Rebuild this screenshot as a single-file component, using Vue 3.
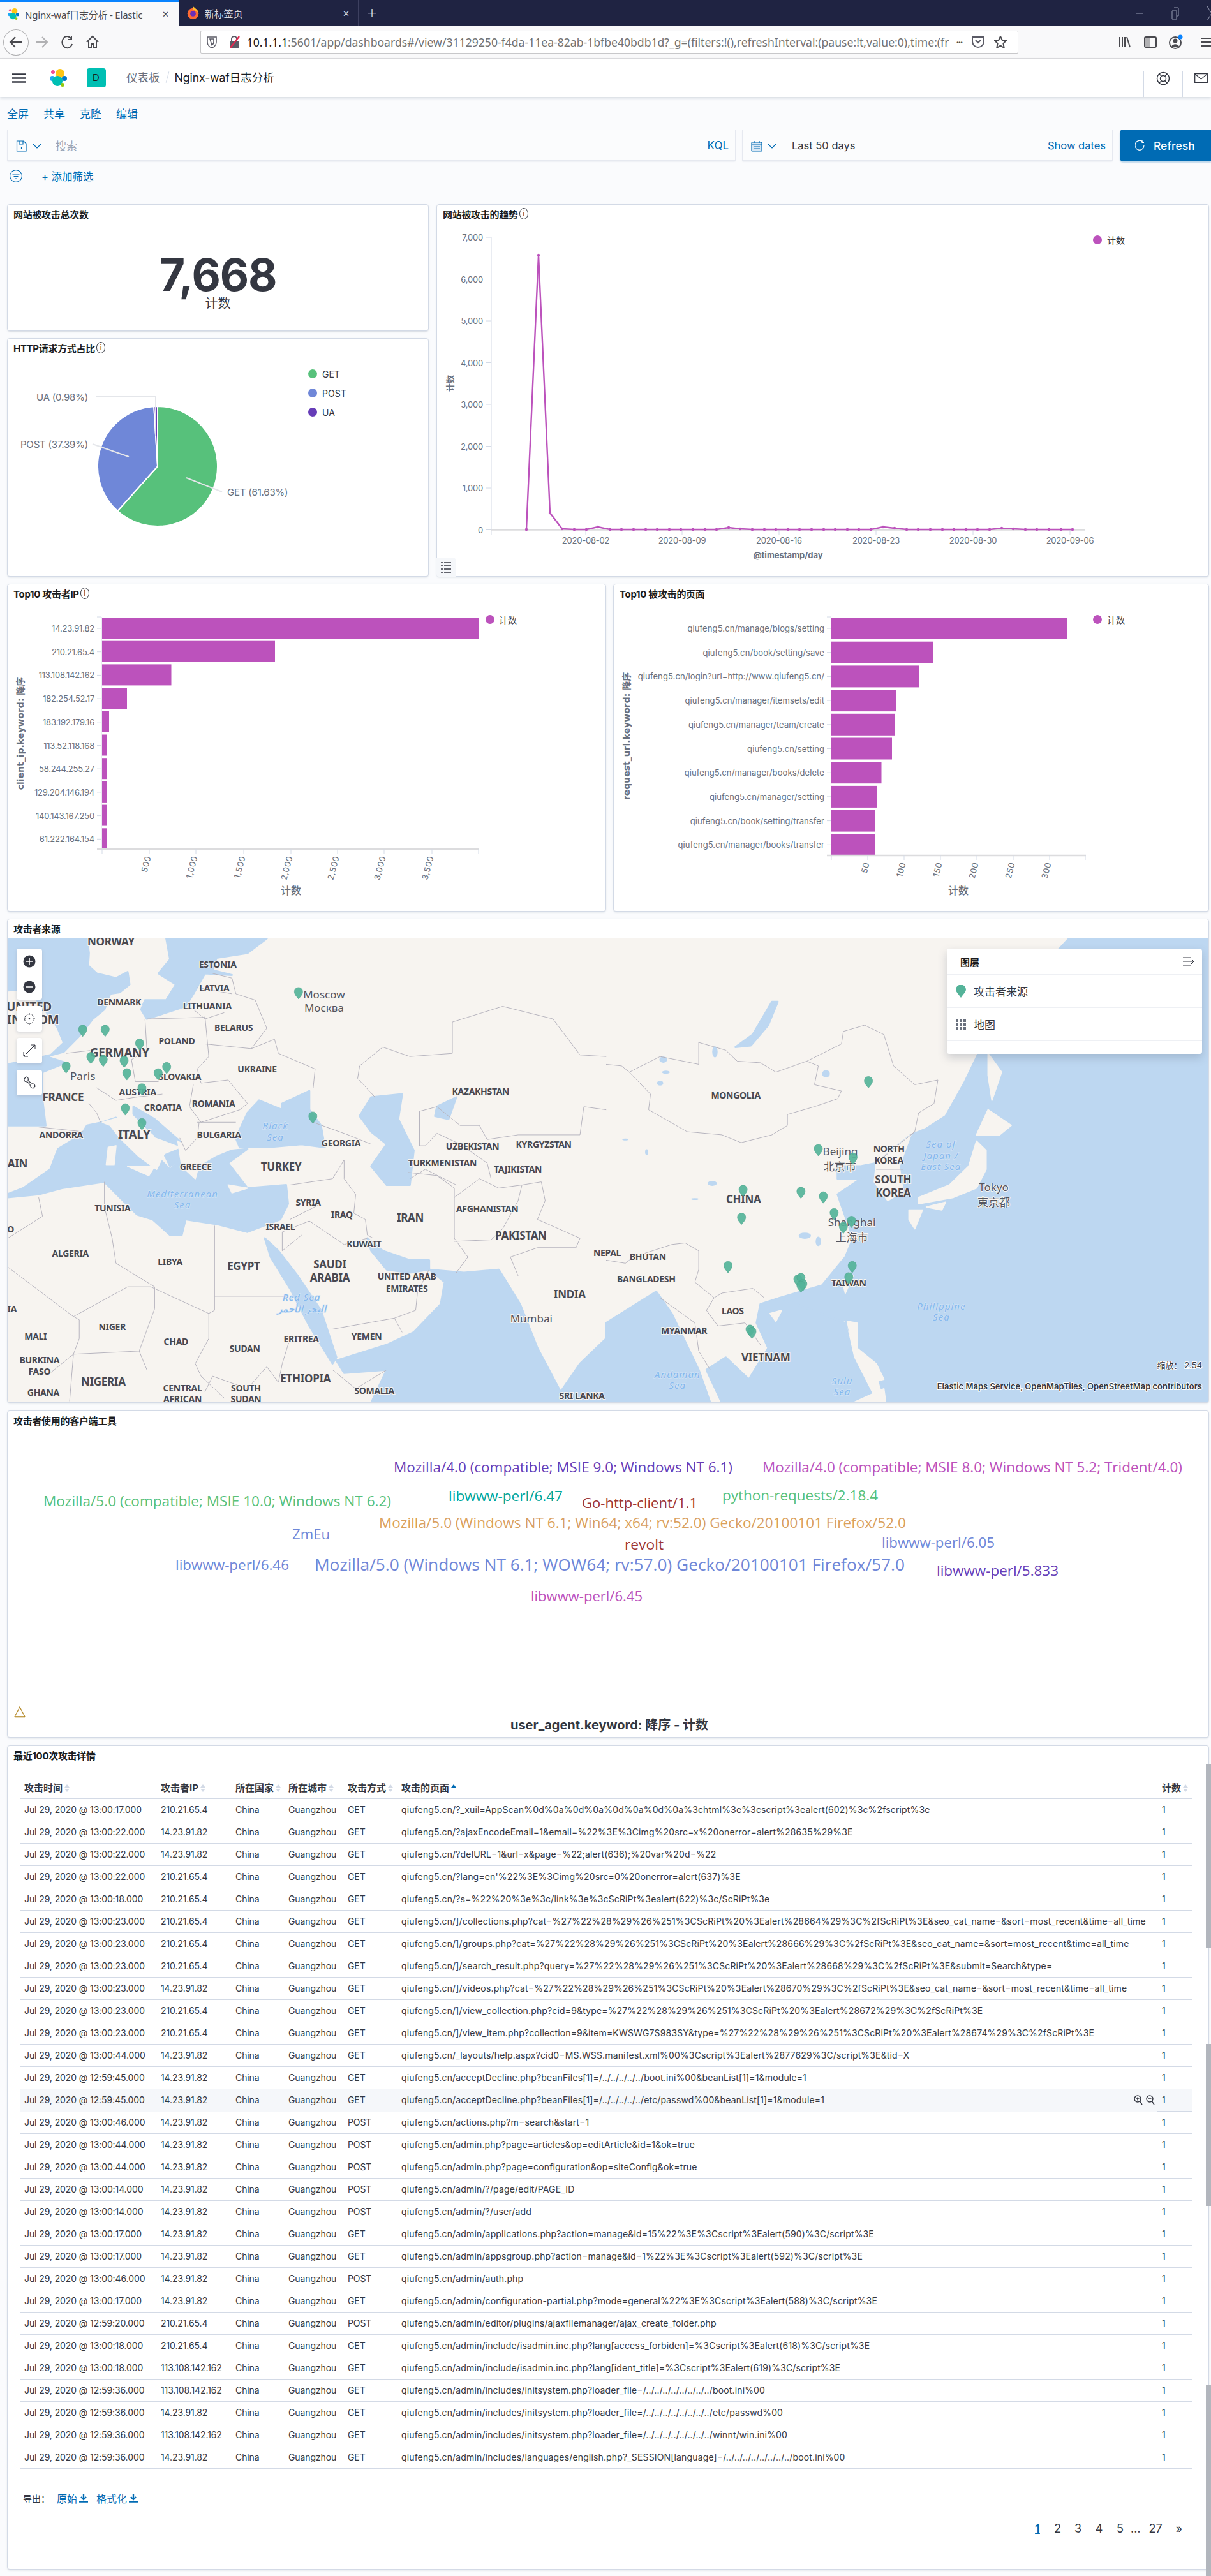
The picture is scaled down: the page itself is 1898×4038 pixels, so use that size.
<script setup>
// dashboard data, chart coordinates are page pixels (svg viewBox is set to match)
const url = 'fbe40bdb1d?_g=(filters:!(),refreshInterval:(pause:!t,value:0),time:(fr'

const pieCx = 247
const pieCy = 731
const pieR = 94
function arc(from, to) {
  const a = (from * 2 * Math.PI) / 100 - Math.PI / 2
  const b = (to * 2 * Math.PI) / 100 - Math.PI / 2
  const big = to - from > 50 ? 1 : 0
  return `M${pieCx},${pieCy} L${pieCx + pieR * Math.cos(a)},${pieCy + pieR * Math.sin(a)} A${pieR},${pieR} 0 ${big} 1 ${pieCx + pieR * Math.cos(b)},${pieCy + pieR * Math.sin(b)} Z`
}
const slices = [
  { d: arc(0, 61.63), color: '#57c17b' },
  { d: arc(61.63, 99.02), color: '#6f87d8' },
  { d: arc(99.02, 100), color: '#663db8' }
]
const pieLegend = [
  { name: 'GET', color: '#57c17b', y: 586 },
  { name: 'POST', color: '#6f87d8', y: 616 },
  { name: 'UA', color: '#663db8', y: 646 }
]

const lineTicksY = [0, 1000, 2000, 3000, 4000, 5000, 6000, 7000].map((v) => ({
  v: v.toLocaleString('en-US'),
  y: 830.5 - (v / 1000) * 65.5
}))
const lineTicksX = [
  { t: '2020-08-02', x: 918 },
  { t: '2020-08-09', x: 1069 },
  { t: '2020-08-16', x: 1221 },
  { t: '2020-08-23', x: 1373 },
  { t: '2020-08-30', x: 1525 },
  { t: '2020-09-06', x: 1677 }
]
const bumps = { 937: 826, 1142: 827, 1161: 829, 1384: 826, 1403: 828, 1570: 828, 1589: 829 }
const linePts = [
  [825, 830],
  [844, 400],
  [862, 804],
  [881, 829]
]
for (let x = 900; x < 1696; x += 18.6) {
  const rx = Math.round(x)
  const key = Object.keys(bumps).find((k) => Math.abs(k - rx) < 10)
  linePts.push([rx, key ? bumps[key] : 830])
}
const linePath = linePts.map((p) => p.join(',')).join(' ')

const ipBars = [
  { name: '14.23.91.82', end: 750 },
  { name: '210.21.65.4', end: 431 },
  { name: '113.108.142.162', end: 268.5 },
  { name: '182.254.52.17', end: 199 },
  { name: '183.192.179.16', end: 171 },
  { name: '113.52.118.168', end: 167 },
  { name: '58.244.255.27', end: 167 },
  { name: '129.204.146.194', end: 167 },
  { name: '140.143.167.250', end: 167 },
  { name: '61.222.164.154', end: 167 }
].map((b, i) => ({ ...b, y: 968 + i * 36.7, h: 33 }))
const ipTicks = [
  ['500', 234],
  ['1,000', 307],
  ['1,500', 382],
  ['2,000', 456],
  ['2,500', 529],
  ['3,000', 602],
  ['3,500', 677]
]

const pageBars = [
  { name: 'qiufeng5.cn/manage/blogs/setting', end: 1672 },
  { name: 'qiufeng5.cn/book/setting/save', end: 1462 },
  { name: 'qiufeng5.cn/login?url=http://www.qiufeng5.cn/', end: 1440 },
  { name: 'qiufeng5.cn/manager/itemsets/edit', end: 1405 },
  { name: 'qiufeng5.cn/manager/team/create', end: 1402 },
  { name: 'qiufeng5.cn/setting', end: 1398 },
  { name: 'qiufeng5.cn/manager/books/delete', end: 1381.5 },
  { name: 'qiufeng5.cn/manager/setting', end: 1375 },
  { name: 'qiufeng5.cn/book/setting/transfer', end: 1372 },
  { name: 'qiufeng5.cn/manager/books/transfer', end: 1372 }
].map((b, i) => ({ ...b, y: 968 + i * 37.7, h: 34 }))
const pageTicks = [
  ['50', 1360],
  ['100', 1417],
  ['150', 1474],
  ['200', 1531],
  ['250', 1588],
  ['300', 1645]
]

// map: points were read off two crops, so each crop has its own scale
const z6 = (x, y) => ({ x: x / 1.65, y: 1440 + y / 2.036 })
const z7 = (x, y) => ({ x: 950 + x / 1.654, y: 1440 + y / 2.036 })

const labels6 = [
  ['NORWAY', 287, 73, 'm'], ['ESTONIA', 563, 145, 's'], ['LATVIA', 554, 221, 's'], ['LITHUANIA', 536, 277, 's'],
  ['DENMARK', 308, 266, 's'], ['UNITED', 75, 280, 'l'], ['KINGDOM', 75, 322, 'l'], ['BELARUS', 604, 347, 's'],
  ['POLAND', 457, 389, 's'], ['GERMANY', 309, 427, 'l'], ['UKRAINE', 665, 480, 's'], ['SLOVAKIA', 465, 504, 's'],
  ['FRANCE', 163, 570, 'm'], ['AUSTRIA', 356, 552, 's'], ['CROATIA', 421, 602, 's'], ['ROMANIA', 552, 590, 's'],
  ['ANDORRA', 158, 690, 's'], ['ITALY', 347, 688, 'l'], ['BULGARIA', 566, 689, 's'], ['GEORGIA', 882, 715, 's'],
  ['SPAIN', 30, 780, 'm'], ['GREECE', 506, 790, 's'], ['TURKEY', 727, 790, 'm'], ['KAZAKHSTAN', 1243, 551, 's'],
  ['UZBEKISTAN', 1222, 725, 's'], ['KYRGYZSTAN', 1406, 720, 's'], ['TURKMENISTAN', 1144, 779, 's'],
  ['TAJIKISTAN', 1339, 799, 's'], ['TUNISIA', 291, 924, 's'], ['SYRIA', 797, 904, 's'], ['IRAQ', 884, 943, 's'],
  ['IRAN', 1061, 954, 'm'], ['AFGHANISTAN', 1260, 926, 's'], ['PAKISTAN', 1347, 1011, 'm'], ['ISRAEL', 725, 982, 's'],
  ['KUWAIT', 941, 1037, 's'], ['MOROCCO', -22, 990, 's'], ['ALGERIA', 182, 1068, 's'], ['LIBYA', 440, 1095, 's'],
  ['EGYPT', 630, 1109, 'm'], ['SAUDI', 853, 1102, 'm'], ['ARABIA', 853, 1145, 'm'], ['UNITED ARAB', 1052, 1142, 's'],
  ['EMIRATES', 1052, 1179, 's'], ['INDIA', 1473, 1199, 'm'], ['MAURITANIA', -30, 1245, 's'], ['NIGER', 290, 1302, 's'],
  ['MALI', 92, 1332, 's'], ['CHAD', 455, 1348, 's'], ['SUDAN', 633, 1371, 's'], ['ERITREA', 779, 1341, 's'],
  ['YEMEN', 948, 1333, 's'], ['BURKINA', 102, 1407, 's'], ['FASO', 102, 1444, 's'], ['NIGERIA', 267, 1478, 'm'],
  ['CENTRAL', 472, 1497, 's'], ['AFRICAN', 472, 1533, 's'], ['SOUTH', 636, 1497, 's'], ['SUDAN', 636, 1533, 's'],
  ['ETHIOPIA', 790, 1466, 'm'], ['SOMALIA', 968, 1505, 's'], ['GHANA', 112, 1512, 's'], ['SRI LANKA', 1505, 1522, 's'],
  ['NEPAL', 1570, 1065, 's']
]
const labels7 = [
  ['MONGOLIA', 336, 563, 's'], ['NORTH', 733, 733, 's'], ['KOREA', 733, 770, 's'], ['SOUTH', 744, 831, 'm'],
  ['KOREA', 744, 874, 'm'], ['CHINA', 356, 895, 'm'], ['BHUTAN', 108, 1078, 's'], ['BANGLADESH', 104, 1150, 's'],
  ['TAIWAN', 629, 1162, 's'], ['LAOS', 328, 1251, 's'], ['MYANMAR', 202, 1314, 's'], ['VIETNAM', 414, 1399, 'm']
]
const cities6 = [['Paris', 214, 501], ['Moscow', 838, 241], ['Москва', 838, 284], ['Mumbai', 1374, 1275]]
const cities7 = [
  ['Beijing', 607, 743], ['北京市', 606, 792], ['Tokyo', 1005, 857], ['東京都', 1005, 905],
  ['Shanghai', 637, 968], ['上海市', 637, 1017]
]
const seas6 = [
  ['Black', 712, 660], ['Sea', 712, 696], ['Mediterranean', 472, 877], ['Sea', 472, 913],
  ['Red Sea', 780, 1207], ['البحر الأحمر', 780, 1245]
]
const seas7 = [
  ['Sea of', 868, 719], ['Japan /', 868, 755], ['East Sea', 868, 790], ['Philippine', 869, 1235], ['Sea', 869, 1270],
  ['Andaman', 185, 1453], ['Sea', 185, 1488], ['Sulu', 612, 1474], ['Sea', 612, 1509]
]
const mapLabels = [
  ...labels6.map(([t, x, y, k]) => ({ t, k, ...z6(x, y) })),
  ...labels7.map(([t, x, y, k]) => ({ t, k, ...z7(x, y) }))
]
const mapCities = [
  ...cities6.map(([t, x, y]) => ({ t, ...z6(x, y) })),
  ...cities7.map(([t, x, y]) => ({ t, ...z7(x, y) }))
]
const mapSeas = [
  ...seas6.map(([t, x, y]) => ({ t, ...z6(x, y) })),
  ...seas7.map(([t, x, y]) => ({ t, ...z7(x, y) }))
]
const pins = [
  ...[[214, 358], [272, 358], [361, 402], [235, 445], [267, 454], [321, 457], [171, 475], [328, 497], [409, 497],
    [431, 477], [367, 545], [324, 609], [367, 656], [772, 238], [809, 635]].map(([x, y]) => z6(x, y)),
  ...[[680, 522], [550, 739], [640, 766], [355, 869], [505, 875], [563, 890], [351, 958], [591, 943], [636, 968],
    [615, 987], [316, 1112], [638, 1112], [629, 1148], [497, 1155], [505, 1150], [510, 1170], [505, 1175], [373, 1315],
    [378, 1322]].map(([x, y]) => z7(x, y))
]
const lakes = [[148, 450, 10, 10], [155, 490, 10, 5], [140, 525, 8, 8], [275, 845, 12, 8], [230, 895, 10, 3],
  [105, 745, 4, 9], [50, 705, 8, 3], [570, 495, 10, 12], [282, 425, 7, 18], [515, 1012, 16, 10], [550, 1030, 7, 15]]

const water6 = [
  'M18,63 L225,63 L230,110 L228,150 L250,175 L300,190 L330,170 L335,210 L310,235 L285,240 L270,290 L240,320 L205,375 L165,425 L120,440 L170,460 L110,490 L108,560 L118,660 L18,660 Z',
  'M430,63 L690,63 L640,110 L560,125 L550,165 L600,180 L530,175 L500,240 L480,280 L380,320 L365,290 L375,260 L430,260 L455,210 L410,175 L440,130 Z',
  'M18,880 L60,860 L130,800 L150,735 L210,690 L225,660 L265,650 L300,635 L330,680 L390,740 L440,800 L470,770 L505,800 L560,760 L600,740 L640,735 L590,780 L640,860 L740,850 L745,910 L725,960 L640,1000 L560,975 L480,960 L470,1010 L440,1010 L395,960 L355,945 L310,890 L270,840 L160,860 L100,880 L18,890 Z',
  'M345,600 L400,640 L465,710 L470,770 L440,790 L400,690 L345,630 Z',
  'M610,700 L640,620 L670,580 L730,610 L730,590 L800,550 L800,610 L830,660 L840,730 L780,720 L690,730 L620,730 Z',
  'M930,630 L960,570 L1040,560 L1030,640 L1070,740 L1060,850 L1000,850 L960,790 L1000,720 L960,680 Z',
  'M685,1020 L720,1060 L770,1140 L830,1250 L870,1400 L860,1420 L800,1300 L750,1180 L700,1080 Z',
  'M950,1020 L990,1060 L1060,1090 L1110,1090 L1110,1120 L1060,1130 L1000,1120 L960,1060 Z',
  'M1110,1120 L1200,1130 L1290,1120 L1345,1230 L1390,1370 L1450,1510 L1500,1420 L1568,1340 L1568,1545 L960,1545 L1000,1440 L890,1450 L870,1410 L1000,1360 L1070,1320 L1140,1230 L1150,1160 Z',
  'M1130,600 L1180,570 L1160,640 L1125,630 Z'
]
const land6 = [
  'M18,235 L70,230 L110,290 L145,350 L160,395 L130,430 L60,450 L18,460 Z',
  'M265,650 L340,625 L400,700 L465,730 L425,750 L405,800 L360,760 L310,700 L285,660 Z',
  'M460,710 L520,760 L505,830 L470,790 Z',
  'M280,730 L300,725 L295,785 L275,785 Z',
  'M330,790 L400,790 L385,820 Z',
  'M590,850 L640,860 L600,875 Z'
]
const border6 = [
  'M375,320 L380,420 L340,450 L350,520 L410,520', 'M240,420 L170,430', 'M530,310 L540,440 L510,480 L520,525',
  'M380,320 L530,315', 'M530,400 L650,415 L710,385 L720,430 L815,480 L810,540',
  'M520,525 L590,515 L640,590 L620,610 L520,650 L490,600 L500,530', 'M250,540 L300,580 L350,570 L420,560',
  'M230,590 L250,620 L260,650', 'M100,665 L215,680', 'M515,650 L510,700 L480,740 L465,700', 'M610,650 L510,650',
  'M550,175 L600,190 L610,240 L660,260 L690,350 L650,415', 'M510,220 L600,240', 'M490,280 L530,320 L580,300',
  'M810,650 L900,690 L960,720', 'M750,850 L860,830 L890,770 L890,830 L920,880 L915,940 L945,960 L950,1010 L965,1020',
  'M1055,810 L1130,820 L1175,860 L1175,1020 L1210,1080 L1180,1130',
  'M1175,890 L1240,830 L1290,860 L1350,850 L1340,900 L1300,990 L1270,1025 L1175,1030',
  'M1060,830 L1100,800 L1180,850', 'M1085,615 L1085,725 L1100,725 L1130,685 L1190,720 L1260,780 L1270,830',
  'M1085,615 L1130,600 L1190,660 L1240,660 L1260,705 L1340,690 L1430,690 L1500,690 L1510,600 L1568,610',
  'M930,470 L990,410 L1060,440 L1170,430 L1170,330 L1300,280 L1430,320 L1500,435 L1568,440',
  'M930,470 L925,510 L970,570',
  'M1350,850 L1400,840 L1410,900 L1390,960 L1500,1020 L1490,1050 L1390,1050 L1320,1080 L1340,1140',
  'M18,1110 L190,1270 L330,1175 L390,1175 L540,1260 L555,1250 L555,980', 'M555,1205 L740,1205',
  'M290,1020 L300,1100 L400,1175 L400,1245 L360,1380 L380,1440', 'M190,1270 L205,1280 L205,1340 L190,1390 L130,1450',
  'M100,890 L110,950 L20,1020', 'M270,840 L270,920 L290,1020', 'M540,1260 L540,1340 L505,1420 L520,1460 L580,1530',
  'M360,1380 L190,1390 L180,1540', 'M750,1340 L730,1420 L720,1480 L690,1430 L640,1500 L550,1460 L530,1510',
  'M860,1440 L920,1500 L1000,1440', 'M860,1310 L1020,1275 L1075,1250 L1080,1190 L1110,1120',
  'M800,965 L890,1040 L950,1020', 'M800,965 L730,1000 L730,1060 L780,1010', 'M830,910 L750,960', 'M1020,1275 L1040,1320'
]
const water7 = [
  'M1200,63 L1568,63 L1568,1545 L725,1545 L700,1440 L650,1380 L620,1280 L560,1290 L450,1210 L560,1170 L620,1080 L640,1020 L620,950 L600,880 L660,830 L600,830 L600,790 L660,790 L700,780 L790,690 L830,670 L880,630 L930,520 L965,430 L1020,300 Z',
  'M0,1290 L130,1190 L170,1260 L240,1440 L270,1545 L0,1545 Z',
  'M450,1210 L620,1290 L640,1400 L700,1545 L300,1545 L260,1440 L310,1400 L370,1470 L420,1370 L390,1290 L400,1230 Z',
  'M430,265 L445,265 L420,340 L375,405 L335,410 L380,370 Z'
]
const land7 = [
  'M700,780 L790,690 L760,790 L770,870 L730,900 L695,840 Z',
  'M960,710 L985,740 L985,800 L960,860 L900,890 L810,910 L810,890 L890,850 L940,790 Z',
  'M990,610 L1050,660 L1020,690 L960,690 Z',
  'M785,930 L820,930 L800,990 L785,960 Z',
  'M830,920 L880,905 L870,930 Z',
  'M990,430 L1025,490 L1000,580 L990,500 Z',
  'M630,1130 L640,1140 L620,1195 L615,1170 Z',
  'M425,1260 L455,1250 L440,1285 Z',
  'M625,1285 L650,1290 L650,1370 L700,1420 L720,1470 L690,1480 L640,1370 Z',
  'M640,1545 L720,1500 L725,1545 Z'
]
const border7 = [
  'M60,490 L140,440 L240,465 L240,395 L310,420 L340,455 L400,460 L440,490 L520,455 L550,470 L540,530 L610,550 L600,575 L540,600 L470,625 L470,660 L430,690 L350,715 L300,690 L210,680 L110,610 L115,560 L60,490',
  'M520,455 L610,400 L615,360 L670,340 L720,370 L745,470 L800,530 L860,515 L850,590 L810,620 L800,680 L780,700',
  'M0,465 L40,470 L60,490',
  'M0,1090 L50,1100 L70,1080 L170,1040 L205,1035 L240,1060 L240,1120 L230,1160 L280,1210 L300,1195 L380,1180 L410,1210',
  'M140,1210 L230,1290 L240,1380 L270,1440', 'M280,1210 L260,1250 L290,1300 L360,1290 L400,1360',
  'M800,680 L730,750 L700,780', 'M700,800 L770,800'
]

const words = [
  { t: 'Mozilla/4.0 (compatible; MSIE 9.0; Windows NT 6.1)', x: 617, w: 531, y: 2299, c: '#663db8', s: 22 },
  { t: 'Mozilla/4.0 (compatible; MSIE 8.0; Windows NT 5.2; Trident/4.0)', x: 1195, w: 658, y: 2299, c: '#bc52bc', s: 22 },
  { t: 'Mozilla/5.0 (compatible; MSIE 10.0; Windows NT 6.2)', x: 68, w: 545, y: 2352, c: '#57c17b', s: 22 },
  { t: 'libwww-perl/6.47', x: 703, w: 179, y: 2344, c: '#00a69b', s: 22 },
  { t: 'Go-http-client/1.1', x: 912, w: 181, y: 2355, c: '#9e3533', s: 22 },
  { t: 'python-requests/2.18.4', x: 1132, w: 244, y: 2343, c: '#57c17b', s: 22 },
  { t: 'Mozilla/5.0 (Windows NT 6.1; Win64; x64; rv:52.0) Gecko/20100101 Firefox/52.0', x: 594, w: 826, y: 2386, c: '#daa05d', s: 22 },
  { t: 'ZmEu', x: 458, w: 59, y: 2404, c: '#6f87d8', s: 22 },
  { t: 'revolt', x: 979, w: 61, y: 2420, c: '#9e3533', s: 22 },
  { t: 'libwww-perl/6.05', x: 1382, w: 177, y: 2417, c: '#6f87d8', s: 22 },
  { t: 'libwww-perl/6.46', x: 275, w: 178, y: 2452, c: '#6f87d8', s: 22 },
  { t: 'Mozilla/5.0 (Windows NT 6.1; WOW64; rv:57.0) Gecko/20100101 Firefox/57.0', x: 493, w: 925, y: 2452, c: '#6f87d8', s: 25 },
  { t: 'libwww-perl/5.833', x: 1468, w: 191, y: 2461, c: '#663db8', s: 22 },
  { t: 'libwww-perl/6.45', x: 832, w: 175, y: 2501, c: '#bc52bc', s: 22 }
]

const A = '14.23.91.82'
const B = '210.21.65.4'
const C = '113.108.142.162'
const rows = [
  ['13:00:17', B, 'GET', '?_xuil=AppScan%0d%0a%0d%0a%0d%0a%0d%0a%3chtml%3e%3cscript%3ealert(602)%3c%2fscript%3e'],
  ['13:00:22', A, 'GET', '?ajaxEncodeEmail=1&email=%22%3E%3Cimg%20src=x%20onerror=alert%28635%29%3E'],
  ['13:00:22', A, 'GET', '?delURL=1&url=x&page=%22;alert(636);%20var%20d=%22'],
  ['13:00:22', B, 'GET', "?lang=en'%22%3E%3Cimg%20src=0%20onerror=alert(637)%3E"],
  ['13:00:18', B, 'GET', '?s=%22%20%3e%3c/link%3e%3cScRiPt%3ealert(622)%3c/ScRiPt%3e'],
  ['13:00:23', B, 'GET', ']/collections.php?cat=%27%22%28%29%26%251%3CScRiPt%20%3Ealert%28664%29%3C%2fScRiPt%3E&seo_cat_name=&sort=most_recent&time=all_time'],
  ['13:00:23', B, 'GET', ']/groups.php?cat=%27%22%28%29%26%251%3CScRiPt%20%3Ealert%28666%29%3C%2fScRiPt%3E&seo_cat_name=&sort=most_recent&time=all_time'],
  ['13:00:23', B, 'GET', ']/search_result.php?query=%27%22%28%29%26%251%3CScRiPt%20%3Ealert%28668%29%3C%2fScRiPt%3E&submit=Search&type='],
  ['13:00:23', A, 'GET', ']/videos.php?cat=%27%22%28%29%26%251%3CScRiPt%20%3Ealert%28670%29%3C%2fScRiPt%3E&seo_cat_name=&sort=most_recent&time=all_time'],
  ['13:00:23', B, 'GET', ']/view_collection.php?cid=9&type=%27%22%28%29%26%251%3CScRiPt%20%3Ealert%28672%29%3C%2fScRiPt%3E'],
  ['13:00:23', B, 'GET', ']/view_item.php?collection=9&item=KWSWG7S983SY&type=%27%22%28%29%26%251%3CScRiPt%20%3Ealert%28674%29%3C%2fScRiPt%3E'],
  ['13:00:44', A, 'GET', '_layouts/help.aspx?cid0=MS.WSS.manifest.xml%00%3Cscript%3Ealert%2877629%3C/script%3E&tid=X'],
  ['12:59:45', A, 'GET', 'acceptDecline.php?beanFiles[1]=/../../../../../boot.ini%00&beanList[1]=1&module=1'],
  ['12:59:45', A, 'GET', 'acceptDecline.php?beanFiles[1]=/../../../../../etc/passwd%00&beanList[1]=1&module=1'],
  ['13:00:46', A, 'POST', 'actions.php?m=search&start=1'],
  ['13:00:44', A, 'POST', 'admin.php?page=articles&op=editArticle&id=1&ok=true'],
  ['13:00:44', A, 'POST', 'admin.php?page=configuration&op=siteConfig&ok=true'],
  ['13:00:14', A, 'POST', 'admin/?/page/edit/PAGE_ID'],
  ['13:00:14', A, 'POST', 'admin/?/user/add'],
  ['13:00:17', A, 'GET', 'admin/applications.php?action=manage&id=15%22%3E%3Cscript%3Ealert(590)%3C/script%3E'],
  ['13:00:17', A, 'GET', 'admin/appsgroup.php?action=manage&id=1%22%3E%3Cscript%3Ealert(592)%3C/script%3E'],
  ['13:00:46', A, 'POST', 'admin/auth.php'],
  ['13:00:17', A, 'GET', 'admin/configuration-partial.php?mode=general%22%3E%3Cscript%3Ealert(588)%3C/script%3E'],
  ['12:59:20', B, 'POST', 'admin/editor/plugins/ajaxfilemanager/ajax_create_folder.php'],
  ['13:00:18', B, 'GET', 'admin/include/isadmin.inc.php?lang[access_forbiden]=%3Cscript%3Ealert(618)%3C/script%3E'],
  ['13:00:18', C, 'GET', 'admin/include/isadmin.inc.php?lang[ident_title]=%3Cscript%3Ealert(619)%3C/script%3E'],
  ['12:59:36', C, 'GET', 'admin/includes/initsystem.php?loader_file=/../../../../../../../../boot.ini%00'],
  ['12:59:36', A, 'GET', 'admin/includes/initsystem.php?loader_file=/../../../../../../../../etc/passwd%00'],
  ['12:59:36', C, 'GET', 'admin/includes/initsystem.php?loader_file=/../../../../../../../../winnt/win.ini%00'],
  ['12:59:36', A, 'GET', 'admin/includes/languages/english.php?_SESSION[language]=/../../../../../../../../boot.ini%00']
]
const columns = ['攻击时间', '攻击者IP', '所在国家', '所在城市', '攻击方式']
const pages = [
  { t: '1', cls: 'p1 on' }, { t: '2', cls: 'p2' }, { t: '3', cls: 'p3' }, { t: '4', cls: 'p3' },
  { t: '5', cls: 'p3' }, { t: '…', cls: 'p4' }, { t: '27', cls: 'p5' }, { t: '»', cls: 'p6' }
]
</script>

<template>
  <div class="page">
    <!-- browser chrome -->
    <div class="tabs">
      <div class="tab active">
        <svg class="fav" viewBox="0 0 28 28" width="18" height="22">
          <circle cx="17" cy="7" r="7" fill="#fec514" /><circle cx="6" cy="5" r="3" fill="#f04e98" />
          <circle cx="5" cy="15" r="4" fill="#1ba9f5" /><circle cx="24" cy="15" r="4" fill="#0077cc" />
          <circle cx="13" cy="19" r="8" fill="#00bfb3" /><circle cx="21" cy="25" r="3" fill="#93c90e" />
        </svg>
        <span class="tab-t">Nginx-waf日志分析 - Elastic</span>
        <span class="tab-x">✕</span>
      </div>
      <div class="tab other">
        <svg class="fav" viewBox="0 0 20 24" width="19" height="21">
          <circle cx="10" cy="13" r="10" fill="#ff6a33" />
          <path d="M10,0 C15,4 20,8 20,13 C17,8 14,8 10,6 Z" fill="#ffbd2e" />
          <circle cx="10" cy="13" r="5" fill="#6b2fb8" />
        </svg>
        <span class="tab-t">新标签页</span>
        <span class="tab-x">✕</span>
      </div>
      <div class="tab-plus">+</div>
      <div class="win">
        <svg width="12" height="12" viewBox="0 0 12 12"><path d="M0,6 H12" stroke="#9aa0b5" fill="none" /></svg>
        <svg width="12" height="20" viewBox="0 0 12 20"><path d="M4,1 H11 V14 H8 M1,6 H8 V19 H1 Z" stroke="#9aa0b5" fill="none" /></svg>
        <svg width="14" height="22" viewBox="0 0 14 22"><path d="M0,0 L14,22 M14,0 L0,22" stroke="#9aa0b5" fill="none" /></svg>
      </div>
    </div>

    <div class="toolbar">
      <div class="nav back">
        <svg width="22" height="22" viewBox="0 0 22 22"><path d="M20,11 H3 M10,3 L2,11 L10,19" fill="none" stroke="#4a4a4f" stroke-width="2" /></svg>
      </div>
      <div class="nav">
        <svg width="22" height="22" viewBox="0 0 22 22"><path d="M2,11 H19 M12,3 L20,11 L12,19" fill="none" stroke="#b1b1b3" stroke-width="2" /></svg>
      </div>
      <div class="nav">
        <svg width="20" height="22" viewBox="0 0 20 22"><path d="M17,6 A8,9 0 1 0 18,14 M17,1 V7 H11" fill="none" stroke="#4a4a4f" stroke-width="2" /></svg>
      </div>
      <div class="nav">
        <svg width="22" height="22" viewBox="0 0 22 22"><path d="M2,11 L11,2 L20,11 M5,9 V20 H9 V14 H13 V20 H17 V9" fill="none" stroke="#4a4a4f" stroke-width="2" /></svg>
      </div>
      <div class="urlbar">
        <svg class="u-shield" width="16" height="20" viewBox="0 0 16 20"><path d="M1,2 H15 V10 C15,15 11,18 8,19 C5,18 1,15 1,10 Z M5,5 H11 V10 C11,12 9,14 8,14.5 Z" fill="none" stroke="#5b5b66" stroke-width="1.6" /></svg>
        <span class="u-sep"></span>
        <svg class="u-lock" width="18" height="20" viewBox="0 0 18 20"><rect x="1" y="8" width="14" height="11" fill="#5b5b66" /><path d="M4,8 V5 A4,4 0 0 1 12,5 V8" fill="none" stroke="#5b5b66" stroke-width="2" /><path d="M2,19 L16,1" stroke="#e22850" stroke-width="2.4" /></svg>
        <span class="u-text"><b>10.1.1.1</b>:5601/app/dashboards#/view/31129250-f4da-11ea-82ab-1b{{ url }}</span>
        <span class="u-dots">•••</span>
        <svg class="u-pocket" width="20" height="20" viewBox="0 0 20 20"><path d="M1,2 H19 V9 A9,9 0 0 1 1,9 Z M6,7 L10,11 L14,7" fill="none" stroke="#5b5b66" stroke-width="2" /></svg>
        <svg class="u-star" width="20" height="20" viewBox="0 0 20 20"><path d="M10,1 L12.8,7 L19,7.8 L14.4,12 L15.7,19 L10,15.5 L4.3,19 L5.6,12 L1,7.8 L7.2,7 Z" fill="none" stroke="#4a4a4f" stroke-width="2" /></svg>
      </div>
      <div class="tool first">
        <svg width="20" height="20" viewBox="0 0 20 20"><path d="M2,2 V18 M6,2 V18 M10,2 V18 M13,2 L18,18" fill="none" stroke="#4a4a4f" stroke-width="2" /></svg>
      </div>
      <div class="tool">
        <svg width="20" height="20" viewBox="0 0 20 20"><rect x="1" y="2" width="18" height="16" rx="2" fill="none" stroke="#4a4a4f" stroke-width="2" /><rect x="2" y="3" width="7" height="14" fill="#b1b1b3" /></svg>
      </div>
      <div class="tool">
        <svg width="24" height="24" viewBox="0 0 24 24"><circle cx="11" cy="13" r="9" fill="none" stroke="#4a4a4f" stroke-width="2" /><circle cx="11" cy="10" r="3.5" fill="#4a4a4f" /><path d="M5,19 C7,14 15,14 17,19" fill="#4a4a4f" /><circle cx="19" cy="4" r="3.5" fill="#0a84ff" /></svg>
      </div>
      <span class="t-sep"></span>
      <svg class="t-menu" width="16" height="16" viewBox="0 0 16 16"><path d="M0,2 H16 M0,8 H16 M0,14 H16" stroke="#4a4a4f" stroke-width="2" /></svg>
    </div>

    <!-- kibana header -->
    <header class="khead">
      <div class="kcell kburger">
        <svg width="22" height="15" viewBox="0 0 22 15"><path d="M0,1.5 H22 M0,7.5 H22 M0,13.5 H22" stroke="#343741" stroke-width="2.6" /></svg>
      </div>
      <div class="kcell klogo">
        <svg viewBox="0 0 28 28" width="28" height="28">
          <circle cx="17" cy="7" r="7" fill="#fec514" /><circle cx="6" cy="5" r="3" fill="#f04e98" />
          <circle cx="5" cy="15" r="4" fill="#1ba9f5" /><circle cx="24" cy="15" r="4" fill="#0077cc" />
          <circle cx="13" cy="19" r="8" fill="#00bfb3" /><circle cx="21" cy="25" r="3" fill="#93c90e" />
        </svg>
      </div>
      <div class="kcell kspace"><span class="dbadge">D</span></div>
      <div class="crumbs"><span class="c1">仪表板</span><span class="c-sl"></span><span class="c2">Nginx-waf日志分析</span></div>
      <div class="kcell kright">
        <svg width="22" height="22" viewBox="0 0 22 22"><circle cx="11" cy="11" r="9.5" fill="none" stroke="#343741" stroke-width="1.5" /><circle cx="11" cy="11" r="4.5" fill="none" stroke="#343741" stroke-width="1.5" /><path d="M5,4 L8,7 M17,4 L14,7 M5,18 L8,15 M17,18 L14,15" stroke="#343741" stroke-width="1.5" /></svg>
      </div>
      <div class="kcell kright last">
        <svg width="21" height="15" viewBox="0 0 21 15"><path d="M.7,.7 H20.3 V14.3 H.7 Z M.7,.7 L10.5,9 L20.3,.7" fill="none" stroke="#343741" stroke-width="1.3" /></svg>
      </div>
    </header>

    <nav class="actions"><a>全屏</a><a>共享</a><a>克隆</a><a>编辑</a></nav>

    <div class="query">
      <div class="qbox search">
        <div class="qleft">
          <svg width="18" height="18" viewBox="0 0 18 18"><path d="M1.5,1 H12 L16,5 V17 H1.5 Z M5,1 V6 H11 V1 M8.5,10 V13" fill="none" stroke="#006bb4" stroke-width="1.2" /></svg>
          <svg width="14" height="8" viewBox="0 0 14 8"><path d="M1,1 L7,7 L13,1" fill="none" stroke="#006bb4" stroke-width="1.2" /></svg>
        </div>
        <span class="qph">搜索</span>
        <span class="kql">KQL</span>
      </div>
      <div class="qbox date">
        <div class="qleft">
          <svg width="18" height="18" viewBox="0 0 18 18"><rect x="1" y="3" width="16" height="14" rx="1" fill="#d9e8f5" stroke="#006bb4" stroke-width="1.2" /><path d="M1,7 H17 M5,1 V4 M13,1 V4 M4,10 H14 M4,13 H14" stroke="#006bb4" stroke-width="1.2" fill="none" /></svg>
          <svg width="14" height="8" viewBox="0 0 14 8"><path d="M1,1 L7,7 L13,1" fill="none" stroke="#006bb4" stroke-width="1.2" /></svg>
        </div>
        <span class="dtext">Last 50 days</span>
        <span class="dshow">Show dates</span>
      </div>
      <button class="refresh">
        <svg width="16" height="18" viewBox="0 0 16 18"><path d="M12,3.5 A7,7.5 0 1 0 14,9 M11,0 V4.5 H14" fill="none" stroke="#fff" stroke-width="1.2" /></svg>
        <span>Refresh</span>
      </button>
    </div>

    <div class="filters">
      <svg width="20" height="20" viewBox="0 0 20 20"><circle cx="10" cy="10" r="9.4" fill="none" stroke="#006bb4" stroke-width="1.1" /><path d="M4.5,7 H15.5 M6.5,10.5 H13.5 M9,14 H11" stroke="#006bb4" stroke-width="1.2" /></svg>
      <span class="f-dash"></span>
      <a class="f-add">+ 添加筛选</a>
    </div>

    <main class="dash">
      <section class="top">
        <div class="top-left">
          <div class="panel p-count">
            <h3>网站被攻击总次数</h3>
            <div class="metric">
              <div class="metric-v">7,668</div>
              <div class="metric-l">计数</div>
            </div>
          </div>
          <div class="panel p-pie">
            <h3>HTTP请求方式占比<i class="info">i</i></h3>
            <svg class="chart" width="659" height="342" viewBox="12 561 659 342">
              <path v-for="s in slices" :key="s.color" :d="s.d" :fill="s.color" stroke="#fff" stroke-width="2" />
              <polyline class="leader" points="151,622 244,622 244,683" />
              <polyline class="leader" points="145,696 202,716" />
              <polyline class="leader" points="292,749 348,771" />
              <text class="tick big" x="138" y="622" text-anchor="end" dominant-baseline="central">UA (0.98%)</text>
              <text class="tick big" x="138" y="696" text-anchor="end" dominant-baseline="central">POST (37.39%)</text>
              <text class="tick big" x="356" y="771" dominant-baseline="central">GET (61.63%)</text>
              <g v-for="l in pieLegend" :key="l.name">
                <circle cx="490" :cy="l.y" r="7" :fill="l.color" />
                <text class="leg" x="505" :y="l.y" dominant-baseline="central">{{ l.name }}</text>
              </g>
            </svg>
          </div>
        </div>
        <div class="panel p-line">
          <h3>网站被攻击的趋势<i class="info">i</i></h3>
          <svg class="chart" width="1209" height="552" viewBox="685 351 1209 552">
            <line class="axis" x1="770" y1="372" x2="770" y2="838" />
            <line class="axis thick" x1="770" y1="830.5" x2="1700" y2="830.5" />
            <g v-for="t in lineTicksY" :key="t.v">
              <line class="axis" x1="762" :y1="t.y" x2="770" :y2="t.y" />
              <text class="tick" x="757" :y="t.y" text-anchor="end" dominant-baseline="central">{{ t.v }}</text>
            </g>
            <g v-for="t in lineTicksX" :key="t.t">
              <line class="axis" :x1="t.x" y1="830" :x2="t.x" y2="838" />
              <text class="tick" :x="t.x" y="847" text-anchor="middle" dominant-baseline="central">{{ t.t }}</text>
            </g>
            <polyline :points="linePath" fill="none" stroke="#bc52bc" stroke-width="2.4" />
            <circle v-for="p in linePts" :key="p[0]" :cx="p[0]" :cy="p[1]" r="2.2" fill="#bc52bc" />
            <text class="atitle" transform="translate(705,601) rotate(-90)" text-anchor="middle" dominant-baseline="central">计数</text>
            <text class="atitle" x="1235" y="870" text-anchor="middle" dominant-baseline="central">@timestamp/day</text>
            <circle cx="1720" cy="376" r="7" fill="#bc52bc" />
            <text class="leg" x="1735" y="376" dominant-baseline="central">计数</text>
          </svg>
          <div class="leg-toggle">
            <svg width="16" height="20" viewBox="0 0 16 20"><path d="M0,3 H3 M0,8 H3 M0,13 H3 M0,18 H3 M5,3 H16 M5,8 H16 M5,13 H16 M5,18 H16" stroke="#343741" stroke-width="1.3" /></svg>
          </div>
        </div>
      </section>

      <section class="second">
        <div class="panel p-bar">
          <h3>Top10 攻击者IP<i class="info">i</i></h3>
          <svg class="chart" width="937" height="482" viewBox="12 946 937 482">
            <rect v-for="b in ipBars" :key="b.name" x="160" :y="b.y" :width="b.end - 160" :height="b.h" fill="#bc52bc" />
            <g v-for="b in ipBars" :key="b.name + 't'">
              <line class="axis" x1="152" :y1="b.y + 17" x2="159" :y2="b.y + 17" />
              <text class="tick" x="148" :y="b.y + 17" text-anchor="end" dominant-baseline="central">{{ b.name }}</text>
            </g>
            <line class="axis" x1="159" y1="967" x2="159" y2="1331" />
            <line class="axis" x1="152" y1="967" x2="159" y2="967" />
            <line class="axis thick" x1="152" y1="1331" x2="751" y2="1331" />
            <line class="axis" x1="160" y1="1331" x2="160" y2="1338" />
            <line class="axis" x1="750" y1="1331" x2="750" y2="1338" />
            <g v-for="t in ipTicks" :key="t[0]">
              <line class="axis" :x1="t[1]" y1="1331" :x2="t[1]" y2="1338" />
              <text class="tick rot" :transform="`translate(${t[1] - 2},1342) rotate(-75)`" text-anchor="end" dominant-baseline="central">{{ t[0] }}</text>
            </g>
            <text class="atitle alt" transform="translate(32,1150) rotate(-90)" text-anchor="middle" dominant-baseline="central">client_ip.keyword: 降序</text>
            <text class="ctitle" x="456" y="1396" text-anchor="middle" dominant-baseline="central">计数</text>
            <circle cx="768" cy="971" r="7" fill="#bc52bc" />
            <text class="leg" x="782" y="971" dominant-baseline="central">计数</text>
          </svg>
        </div>
        <div class="panel p-bar">
          <h3>Top10 被攻击的页面</h3>
          <svg class="chart" width="932" height="482" viewBox="962 946 932 482">
            <rect v-for="b in pageBars" :key="b.name" x="1303" :y="b.y" :width="b.end - 1303" :height="b.h" fill="#bc52bc" />
            <g v-for="b in pageBars" :key="b.name + 't'">
              <line class="axis" x1="1296" :y1="b.y + 17" x2="1303" :y2="b.y + 17" />
              <text class="tick url-tick" x="1292" :y="b.y + 17" text-anchor="end" dominant-baseline="central">{{ b.name }}</text>
            </g>
            <line class="axis" x1="1296" y1="967" x2="1303" y2="967" />
            <line class="axis thick" x1="1296" y1="1341" x2="1702" y2="1341" />
            <line class="axis" x1="1303" y1="1341" x2="1303" y2="1348" />
            <line class="axis" x1="1701" y1="1341" x2="1701" y2="1348" />
            <g v-for="t in pageTicks" :key="t[0]">
              <line class="axis" :x1="t[1]" y1="1341" :x2="t[1]" y2="1348" />
              <text class="tick rot" :transform="`translate(${t[1] - 2},1352) rotate(-75)`" text-anchor="end" dominant-baseline="central">{{ t[0] }}</text>
            </g>
            <text class="atitle alt" transform="translate(982,1154) rotate(-90)" text-anchor="middle" dominant-baseline="central">request_url.keyword: 降序</text>
            <text class="ctitle" x="1502" y="1396" text-anchor="middle" dominant-baseline="central">计数</text>
            <circle cx="1720" cy="971" r="7" fill="#bc52bc" />
            <text class="leg" x="1735" y="971" dominant-baseline="central">计数</text>
          </svg>
        </div>
      </section>

      <section class="panel p-map">
        <h3>攻击者来源</h3>
        <div class="map-wrap">
          <svg class="chart" width="1882" height="727" viewBox="12 1471 1882 727">
            <rect x="12" y="1471" width="1882" height="727" fill="#f7f4f0" />
            <g transform="translate(0,1440) scale(0.606,0.4912)">
              <path v-for="(d, i) in water6" :key="'w6' + i" :d="d" class="water" />
              <path v-for="(d, i) in land6" :key="'l6' + i" :d="d" class="land" />
              <path v-for="(d, i) in border6" :key="'b6' + i" :d="d" class="border" />
            </g>
            <g transform="translate(950,1440) scale(0.6046,0.4912)">
              <path v-for="(d, i) in water7" :key="'w7' + i" :d="d" class="water" />
              <path v-for="(d, i) in land7" :key="'l7' + i" :d="d" class="land" />
              <ellipse v-for="(l, i) in lakes" :key="'lk' + i" :cx="l[0]" :cy="l[1]" :rx="l[2]" :ry="l[3]" fill="#bdd7f1" />
              <path v-for="(d, i) in border7" :key="'b7' + i" :d="d" class="border" />
            </g>
            <text v-for="(l, i) in mapLabels" :key="'ml' + i" :class="['mlabel', l.k]" :x="l.x" :y="l.y" text-anchor="middle" dominant-baseline="central">{{ l.t }}</text>
            <text v-for="(l, i) in mapCities" :key="'mc' + i" class="mcity" :x="l.x" :y="l.y" text-anchor="middle" dominant-baseline="central">{{ l.t }}</text>
            <text v-for="(l, i) in mapSeas" :key="'ms' + i" class="msea" :x="l.x" :y="l.y" text-anchor="middle" dominant-baseline="central">{{ l.t }}</text>
            <path v-for="(p, i) in pins" :key="'p' + i" :transform="`translate(${p.x},${p.y})`" d="M0,9 C-3,5 -6.5,2 -6.5,-2.5 A6.5,6.5 0 0 1 6.5,-2.5 C6.5,2 3,5 0,9 Z" fill="#54b399" fill-opacity=".92" stroke="#4ba38b" stroke-width=".6" />
            <text class="mzoom" x="1884" y="2140" text-anchor="end" dominant-baseline="central">缩放： 2.54</text>
            <text class="mattr" x="1884" y="2173" text-anchor="end" dominant-baseline="central">Elastic Maps Service, OpenMapTiles, OpenStreetMap contributors</text>
          </svg>
          <div class="mctl">
            <div class="mbtn zoomgrp">
              <svg width="20" height="20" viewBox="0 0 20 20"><circle cx="10" cy="10" r="9.5" fill="#343741" /><path d="M10,5 V15 M5,10 H15" stroke="#fff" stroke-width="1.6" /></svg>
              <svg width="20" height="20" viewBox="0 0 20 20"><circle cx="10" cy="10" r="9.5" fill="#343741" /><path d="M5,10 H15" stroke="#fff" stroke-width="1.6" /></svg>
            </div>
            <div class="mbtn">
              <svg width="20" height="20" viewBox="0 0 20 20"><circle cx="10" cy="10" r="7.5" fill="none" stroke="#343741" stroke-dasharray="4 2.5" /><circle cx="10" cy="10" r="1.3" fill="#343741" /><path d="M10,1 V4 M10,16 V19 M1,10 H4 M16,10 H19" stroke="#343741" /></svg>
            </div>
            <div class="mbtn">
              <svg width="20" height="20" viewBox="0 0 20 20"><path d="M1,19 L19,1 M12,1 H19 V8 M1,12 V19 H8" fill="none" stroke="#343741" /></svg>
            </div>
            <div class="mbtn">
              <svg width="20" height="20" viewBox="0 0 20 20"><path d="M2,4 L5,1 C8,1 9,4 8,7 L13,11 C16,11 19,13 19,16 L16,19 C13,19 11,16 11,13 L7,9 C4,9 1,8 2,4 Z" fill="none" stroke="#343741" stroke-width="1.2" /></svg>
            </div>
          </div>
          <div class="layers">
            <div class="l-head">
              <span>图层</span>
              <svg width="18" height="14" viewBox="0 0 18 14"><path d="M0,1 H12 M0,7 H17 M0,13 H12 M13,3 L17,7 L13,11" fill="none" stroke="#343741" /></svg>
            </div>
            <div class="l-row">
              <svg width="16" height="20" viewBox="0 0 16 20"><path d="M8,20 C5,15 0,11 0,7 A8,7.5 0 0 1 16,7 C16,11 11,15 8,20 Z" fill="#54b399" /></svg>
              <span>攻击者来源</span>
            </div>
            <div class="l-row">
              <svg width="16" height="16" viewBox="0 0 16 16"><g fill="#69707d"><rect x="0" y="0" width="4" height="4" /><rect x="6" y="0" width="4" height="4" /><rect x="12" y="0" width="4" height="4" /><rect x="0" y="6" width="4" height="4" /><rect x="6" y="6" width="4" height="4" /><rect x="12" y="6" width="4" height="4" /><rect x="0" y="12" width="4" height="4" /><rect x="6" y="12" width="4" height="4" /><rect x="12" y="12" width="4" height="4" /></g></svg>
              <span>地图</span>
            </div>
          </div>
        </div>
      </section>

      <section class="panel p-cloud">
        <h3>攻击者使用的客户端工具</h3>
        <svg class="chart" width="1882" height="481" viewBox="12 2242 1882 481">
          <text v-for="w in words" :key="w.t" class="word" :x="w.x" :y="w.y" :fill="w.c" :font-size="w.s" :textLength="w.w" lengthAdjust="spacingAndGlyphs" dominant-baseline="central">{{ w.t }}</text>
          <path d="M31,2676 L39,2691 H23 Z" fill="none" stroke="#b58a2a" stroke-width="1.3" />
          <path d="M23,2691.5 H39" stroke="#b58a2a" stroke-width="1.6" />
          <text class="cloud-cap" x="955" y="2704" text-anchor="middle" dominant-baseline="central">user_agent.keyword: 降序 - 计数</text>
        </svg>
      </section>

      <section class="panel p-table">
        <h3>最近100次攻击详情</h3>
        <table class="grid">
          <colgroup>
            <col class="c-time" /><col class="c-ip" /><col class="c-ct" /><col class="c-city" /><col class="c-m" /><col class="c-url" /><col class="c-n" />
          </colgroup>
          <thead>
            <tr>
              <th v-for="c in columns" :key="c">{{ c }}<span class="sort"></span></th>
              <th>攻击的页面<span class="sort up"></span></th>
              <th>计数<span class="sort"></span></th>
            </tr>
          </thead>
          <tbody>
            <tr v-for="(r, i) in rows" :key="i" :class="{ hover: i === 13 }">
              <td>Jul 29, 2020 @ {{ r[0] }}.000</td>
              <td>{{ r[1] }}</td>
              <td>China</td>
              <td>Guangzhou</td>
              <td>{{ r[2] }}</td>
              <td class="u">
                qiufeng5.cn/{{ r[3] }}
                <span v-if="i === 13" class="cell-icons">
                  <svg width="14" height="16" viewBox="0 0 14 16"><circle cx="6" cy="6" r="5" fill="none" stroke="#343741" stroke-width="1.5" /><path d="M9.5,10 L13,15 M6,3.5 V8.5 M3.5,6 H8.5" stroke="#343741" stroke-width="1.5" /></svg>
                  <svg width="14" height="16" viewBox="0 0 14 16"><circle cx="6" cy="6" r="5" fill="none" stroke="#343741" stroke-width="1.5" /><path d="M9.5,10 L13,15 M3.5,6 H8.5" stroke="#343741" stroke-width="1.5" /></svg>
                </span>
              </td>
              <td class="n">1</td>
            </tr>
          </tbody>
        </table>
        <div class="export">
          <span>导出：</span>
          <a>原始<svg width="14" height="14" viewBox="0 0 14 14"><path d="M7,0 V8 M3,5 L7,9 L11,5 M0,12.5 H14" fill="none" stroke="#006bb4" stroke-width="2.4" /></svg></a>
          <a>格式化<svg width="14" height="14" viewBox="0 0 14 14"><path d="M7,0 V8 M3,5 L7,9 L11,5 M0,12.5 H14" fill="none" stroke="#006bb4" stroke-width="2.4" /></svg></a>
        </div>
        <div class="pager">
          <span v-for="p in pages" :key="p.t + p.cls" :class="p.cls"><em>{{ p.t }}</em></span>
        </div>
      </section>
    </main>

    <!-- window scrollbar fragments lying over the page -->
    <span class="sb sb1"></span>
    <span class="sb sb2"></span>
    <span class="sb sb3"></span>
  </div>
</template>

<style scoped>
.page {
  position: relative;
  width: 1898px;
  height: 4038px;
  overflow: hidden;
  background: #fafbfd;
  font-family: Inter, "Noto Sans CJK SC", sans-serif;
  color: #343741;
}

/* browser */
.tabs {
  display: flex;
  align-items: stretch;
  height: 41px;
  background: #1f2342;
}
.tab {
  display: flex;
  align-items: center;
  font: 15px "Noto Sans", "Noto Sans CJK SC", sans-serif;
  box-sizing: border-box;
}
.tab.active {
  width: 280px;
  padding-left: 12px;
  background: #f9f9fa;
  border-top: 3px solid #0a84ff;
  color: #4a4a4f;
}
.tab.other {
  width: 282px;
  padding-left: 13px;
  color: #d7d8e0;
  border-right: 1px solid #3d4060;
}
.tab-t {
  margin-left: 9px;
  width: 215px;
  white-space: nowrap;
  overflow: hidden;
  letter-spacing: -0.2px;
}
.tab.other .tab-t {
  width: 216px;
}
.tab-x {
  font-size: 13px;
}
.tab-plus {
  width: 42px;
  text-align: center;
  color: #d7d8e0;
  font: 300 28px/38px "Noto Sans", sans-serif;
}
.win {
  margin-left: auto;
  display: flex;
  align-items: center;
  gap: 44px;
  padding-right: 0;
  margin-right: -8px;
}
.toolbar {
  position: relative;
  display: flex;
  align-items: center;
  height: 51px;
  box-sizing: border-box;
  padding-left: 5px;
  background: #f9f9fa;
  border-bottom: 1px solid #dcdcde;
}
.nav {
  width: 40px;
  height: 41px;
  display: flex;
  align-items: center;
  justify-content: center;
  box-sizing: border-box;
}
.nav.back {
  border: 1px solid #b1b1b3;
  border-radius: 50%;
  background: #fbfbfc;
}
.urlbar {
  display: flex;
  align-items: center;
  width: 1286px;
  height: 36px;
  margin-left: 149px;
  box-sizing: border-box;
  background: #fff;
  border: 1px solid #c8c8ca;
  border-radius: 2px;
  font: 17.6px "Noto Sans", sans-serif;
  color: #737373;
  white-space: nowrap;
  overflow: hidden;
}
.u-shield {
  margin-left: 9px;
}
.u-sep {
  width: 1px;
  height: 26px;
  background: #dcdcde;
  margin: 0 9px 0 9px;
}
.u-lock {
  flex: none;
}
.u-text {
  margin-left: 10px;
  width: 1100px;
  flex: none;
  overflow: hidden;
}
.u-text b {
  font-weight: 400;
  color: #18181a;
}
.u-dots {
  margin-left: 12px;
  font-size: 11px;
  letter-spacing: -1px;
  color: #4a4a4f;
}
.u-pocket {
  margin-left: 15px;
}
.u-star {
  margin-left: 15px;
}
.tool {
  width: 40px;
  display: flex;
  justify-content: center;
}
.tool.first {
  margin-left: 147px;
}
.t-sep {
  width: 1px;
  height: 40px;
  margin-left: 5px;
  background: #dcdcde;
}
.t-menu {
  margin-left: 13px;
}

/* kibana chrome */
.khead {
  position: relative;
  z-index: 1;
  display: flex;
  align-items: flex-end;
  height: 60px;
  background: #fff;
  box-shadow: 0 2px 4px rgba(152, 162, 179, 0.35);
}
.kcell {
  height: 40px;
  display: flex;
  align-items: flex-start;
  justify-content: center;
  box-sizing: border-box;
  border-right: 1px solid #d3dae6;
}
.kburger {
  width: 60px;
  padding-top: 3px;
}
.klogo {
  width: 61px;
  height: 60px;
  border-right: 0;
  position: relative;
  padding-top: 16px;
}
.klogo::after {
  content: "";
  position: absolute;
  right: 0;
  bottom: 0;
  width: 1px;
  height: 40px;
  background: #d3dae6;
}
.kspace {
  width: 60px;
}
.dbadge {
  width: 30px;
  height: 30px;
  margin-top: -5px;
  background: #00bfb3;
  border-radius: 4px;
  text-align: center;
  font-size: 15px;
  line-height: 30px;
  color: #1a1c21;
}
.crumbs {
  flex: 1;
  align-self: center;
  display: flex;
  align-items: center;
  padding-left: 17px;
  padding-bottom: 3px;
  font-size: 17.5px;
  white-space: nowrap;
}
.c1 {
  color: #69707d;
}
.c-sl {
  width: 1px;
  height: 18px;
  margin: 0 11px;
  background: #d3dae6;
  transform: rotate(15deg);
}
.c2 {
  color: #1a1c21;
}
.kright {
  width: 61px;
  border-right: 0;
  border-left: 1px solid #d3dae6;
}
.kright.last {
  width: 45px;
  justify-content: flex-start;
  padding: 3px 0 0 18px;
}
.actions {
  display: flex;
  gap: 23px;
  align-items: center;
  height: 51px;
  padding: 0 0 0 11px;
  font-size: 17px;
  color: #006bb4;
  box-sizing: border-box;
}
.query {
  display: flex;
  height: 50px;
  padding-left: 11px;
}
.qbox {
  display: flex;
  align-items: center;
  height: 49px;
  box-sizing: border-box;
  background: #fbfcfd;
  border: 1px solid #e6e9f0;
  box-shadow: 0 2px 2px -1px rgba(152, 162, 179, 0.3);
  font-size: 17px;
}
.qbox.search {
  width: 1142px;
}
.qbox.date {
  width: 581px;
  margin-left: 10px;
}
.qleft {
  width: 67px;
  height: 46px;
  margin-top: 2px;
  display: flex;
  align-items: center;
  justify-content: center;
  gap: 8px;
  box-sizing: border-box;
  border-right: 1px solid #e6e9f0;
}
.qph {
  margin-left: 8px;
  color: #98a2b3;
}
.kql {
  margin-left: auto;
  margin-right: 10px;
  color: #006bb4;
}
.dtext {
  margin-left: 10px;
  color: #343741;
  font-size: 16.5px;
}
.dshow {
  margin-left: auto;
  margin-right: 10px;
  color: #006bb4;
  font-size: 16.5px;
}
.refresh {
  display: flex;
  align-items: center;
  gap: 13px;
  width: 143px;
  height: 50px;
  margin-left: 11px;
  padding: 0 0 0 24px;
  border: 0;
  border-radius: 5px 0 0 5px;
  background: #006bb4;
  color: #fff;
  font: 500 17.5px Inter, sans-serif;
  box-shadow: 0 2px 2px rgba(0, 107, 180, 0.25);
}
.filters {
  display: flex;
  align-items: center;
  height: 67px;
  padding: 0 0 21px 15px;
  box-sizing: border-box;
}
.f-dash {
  width: 13px;
  height: 1px;
  margin: 0 12px 4px 7px;
  background: #d3dae6;
}
.f-add {
  font-size: 16.5px;
  color: #006bb4;
  margin-left: -2px;
}

/* dashboard */
.dash {
  display: flex;
  flex-direction: column;
  gap: 11px;
  padding: 0 3px 0 11px;
}
.panel {
  position: relative;
  box-sizing: border-box;
  background: #fff;
  border: 1px solid #d3dae6;
  border-radius: 4px;
  box-shadow: 0 2px 2px -1px rgba(152, 162, 179, 0.3), 0 1px 5px -2px rgba(152, 162, 179, 0.3);
}
.panel h3 {
  display: flex;
  align-items: center;
  height: 30px;
  box-sizing: border-box;
  margin: 0;
  padding: 0 0 2px 9px;
  font-size: 15px;
  font-weight: 700;
  color: #1a1c21;
  letter-spacing: -0.3px;
}
.info {
  width: 12px;
  height: 16px;
  margin-left: 2px;
  border: 1px solid #343741;
  border-radius: 50%;
  font: 400 11px/16px Inter, sans-serif;
  text-align: center;
}
.chart {
  display: block;
  overflow: hidden;
}
.top {
  display: flex;
  gap: 12px;
  height: 584px;
}
.top-left {
  display: flex;
  flex-direction: column;
  gap: 11px;
  width: 661px;
}
.p-count {
  height: 199px;
}
.metric {
  margin-top: 43px;
  text-align: center;
}
.metric-v {
  font-size: 70px;
  font-weight: 700;
  line-height: 74px;
  color: #343741;
  letter-spacing: -1.2px;
}
.metric-l {
  font-size: 20px;
  line-height: 26px;
  margin-top: -5px;
}
.p-pie {
  height: 374px;
}
.p-line {
  width: 1211px;
  height: 584px;
}
.leg-toggle {
  position: absolute;
  left: -1px;
  bottom: -1px;
  width: 30px;
  height: 30px;
  display: flex;
  align-items: center;
  justify-content: center;
  background: #f5f7fa;
  border-radius: 0 4px 0 4px;
}
.second {
  display: flex;
  gap: 11px;
  height: 514px;
}
.p-bar {
  flex: none;
  width: 939px;
}
.p-bar + .p-bar {
  width: 934px;
}
.p-map {
  height: 759px;
}
.map-wrap {
  position: relative;
}
.p-cloud {
  height: 513px;
  margin-top: 1px;
}
.p-table {
  height: 1292px;
  margin-top: 1px;
}
svg text {
  font-family: Inter, "Noto Sans CJK SC", sans-serif;
}
.tick {
  font-size: 13px;
  fill: #69707d;
  letter-spacing: -0.2px;
}
.tick.big {
  font-size: 15px;
}
.tick.url-tick {
  letter-spacing: 0.1px;
}
.rot {
  letter-spacing: 0.5px;
}
.leg {
  font-size: 14px;
  fill: #343741;
}
.atitle {
  font-size: 13px;
  font-weight: 700;
  fill: #69707d;
}
.atitle.alt {
  font-family: "DejaVu Sans", "Noto Sans CJK SC", sans-serif;
  font-size: 14px;
}
.ctitle {
  font-size: 16px;
  font-weight: 500;
  fill: #69707d;
}
.axis {
  stroke: #d3dae6;
  stroke-width: 1;
}
.axis.thick {
  stroke: #dcdcde;
  stroke-width: 2.5;
}
.leader {
  fill: none;
  stroke: #e4e6ea;
  stroke-width: 2;
}
.water {
  fill: #bdd7f1;
  stroke: #bdd7f1;
  stroke-width: 3;
  stroke-linejoin: round;
  vector-effect: non-scaling-stroke;
}
.land {
  fill: #f7f4f0;
  stroke: #f7f4f0;
  stroke-width: 2;
  stroke-linejoin: round;
  vector-effect: non-scaling-stroke;
}
.border {
  fill: none;
  stroke: #b7b5bf;
  stroke-width: 1;
  stroke-linejoin: round;
  vector-effect: non-scaling-stroke;
}
.mlabel {
  font-family: "Noto Sans", "Noto Sans CJK SC", sans-serif;
  font-weight: 700;
  fill: #484850;
  stroke: #f7f4f0;
  stroke-width: 2px;
  paint-order: stroke;
  letter-spacing: -0.3px;
}
.mlabel.s {
  font-size: 14px;
}
.mlabel.m {
  font-size: 17px;
}
.mlabel.l {
  font-size: 19px;
}
.mcity {
  font-family: "Noto Sans", "Noto Sans CJK SC", sans-serif;
  font-size: 17px;
  fill: #55555e;
  stroke: #f7f4f0;
  stroke-width: 2px;
  paint-order: stroke;
}
.msea {
  font-family: "Noto Sans", "Noto Sans CJK SC", sans-serif;
  font-size: 15px;
  font-style: italic;
  letter-spacing: 1px;
  fill: #85b8ee;
  stroke: #cfe2f5;
  stroke-width: 1.5px;
  paint-order: stroke;
}
.mzoom {
  font-size: 13px;
  fill: #343741;
  stroke: #fff;
  stroke-width: 2px;
  paint-order: stroke;
}
.mattr {
  font-size: 13px;
  font-weight: 600;
  fill: #343741;
  stroke: #fff;
  stroke-width: 2px;
  paint-order: stroke;
}
.mctl {
  position: absolute;
  left: 14px;
  top: 16px;
  display: flex;
  flex-direction: column;
  gap: 10px;
}
.mbtn {
  width: 40px;
  height: 40px;
  display: flex;
  align-items: center;
  justify-content: center;
  background: #fff;
  border-radius: 4px;
  box-shadow: 0 2px 5px rgba(152, 162, 179, 0.4);
}
.mbtn.zoomgrp {
  height: 80px;
  flex-direction: column;
  gap: 20px;
}
.layers {
  position: absolute;
  right: 10px;
  top: 16px;
  width: 400px;
  height: 165px;
  background: #fff;
  border-radius: 4px;
  box-shadow: 0 6px 14px rgba(80, 90, 110, 0.25);
  font-size: 17px;
}
.l-head {
  display: flex;
  align-items: center;
  justify-content: space-between;
  height: 40px;
  padding: 0 12px 0 21px;
  border-bottom: 1px solid #eef0f4;
  font-size: 15px;
  font-weight: 700;
  color: #1a1c21;
}
.l-row {
  display: flex;
  align-items: center;
  height: 51px;
  gap: 12px;
  padding-left: 14px;
  border-bottom: 1px solid #eef0f4;
}
.word {
  font-family: "Open Sans", sans-serif;
}
.cloud-cap {
  font-size: 20px;
  font-weight: 700;
  fill: #343741;
}

/* table */
.grid {
  width: 1838px;
  margin: 18px 0 0 19px;
  border-collapse: collapse;
  table-layout: fixed;
}
.c-time { width: 214px; }
.c-ip { width: 117px; }
.c-ct { width: 83px; }
.c-city { width: 93px; }
.c-m { width: 84px; }
.c-url { width: 1192px; }
.c-n { width: 55px; }
.grid th {
  height: 34px;
  padding: 0 0 0 7px;
  box-sizing: border-box;
  text-align: left;
  font-size: 15px;
  font-weight: 700;
  color: #343741;
  border-bottom: 1px solid #d3dae6;
  white-space: nowrap;
}
.grid td {
  height: 35px;
  padding: 0 0 0 7px;
  box-sizing: border-box;
  font-size: 14px;
  letter-spacing: -0.1px;
  color: #343741;
  border-bottom: 1px solid #d3dae6;
  white-space: nowrap;
  overflow: hidden;
}
.grid td.u {
  position: relative;
  letter-spacing: 0.15px;
}
.grid tr.hover td {
  background: #f5f7fa;
  border-bottom-color: #f5f7fa;
}
.grid tr.hover td.n {
  background: #f5f7fa;
  border-bottom-color: #d3dae6;
}
.cell-icons {
  position: absolute;
  right: 4px;
  top: 9px;
  display: flex;
  gap: 5px;
}
.sort {
  display: inline-block;
  position: relative;
  width: 8px;
  height: 14px;
  margin-left: 3px;
  vertical-align: -2px;
}
.sort::before,
.sort::after {
  content: "";
  position: absolute;
  left: 0;
  border-left: 4px solid transparent;
  border-right: 4px solid transparent;
}
.sort::before {
  top: 1px;
  border-bottom: 5px solid #d3dae6;
}
.sort::after {
  bottom: 1px;
  border-top: 5px solid #d3dae6;
}
.sort.up::before {
  border-bottom-color: #006bb4;
}
.sort.up::after {
  display: none;
}
.export {
  display: flex;
  align-items: center;
  height: 20px;
  margin-top: 36px;
  padding-left: 24px;
  font-size: 16px;
  color: #343741;
}
.export a {
  display: inline-flex;
  align-items: center;
  gap: 3px;
  margin-left: 13px;
  color: #006bb4;
}
.export span {
  width: 40px;
  white-space: nowrap;
  font-size: 14px;
}
.pager {
  display: flex;
  justify-content: flex-end;
  height: 20px;
  margin-top: 28px;
  padding-right: 35px;
  font-size: 18px;
  line-height: 20px;
  text-align: center;
}
.pager em {
  font-style: normal;
}
.p1 { width: 32px; }
.p2 { width: 31px; }
.p3 { width: 33px; }
.p4 { width: 13px; }
.p5 { width: 52px; }
.p6 { width: 22px; }
.on {
  color: #006bb4;
  font-weight: 700;
}
.on em {
  text-decoration: underline;
}
.sb {
  position: absolute;
  right: 0;
  width: 8px;
  background: #b2b6bd;
}
.sb1 { top: 2765px; height: 289px; }
.sb2 { top: 3204px; height: 254px; }
.sb3 { top: 3739px; height: 299px; }
</style>
